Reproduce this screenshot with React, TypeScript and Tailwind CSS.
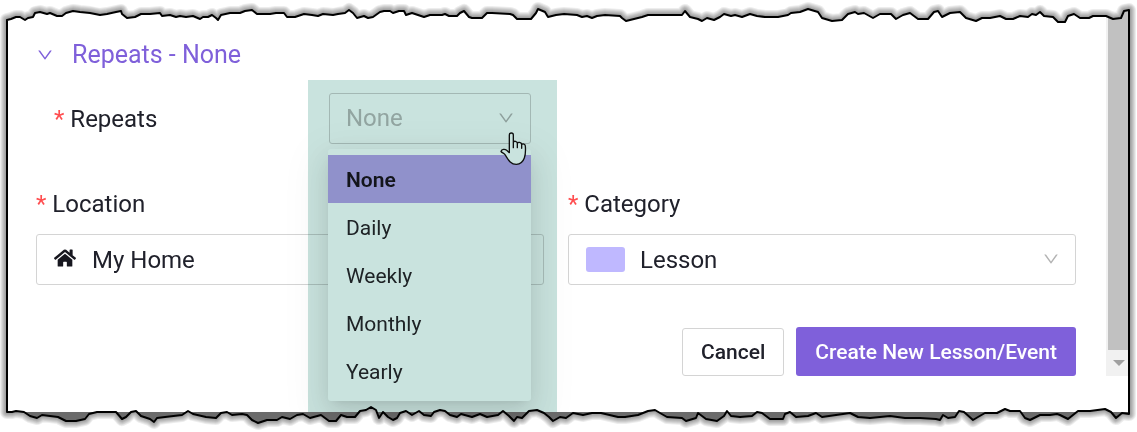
import { useState } from 'react';
import { AiOutlineDown } from 'react-icons/ai';
import { FaHome } from 'react-icons/fa';

const repeatOptions = ['None', 'Daily', 'Weekly', 'Monthly', 'Yearly'];

const topEdge =
  '7,20 11,19 16,17 20,17 25,20 28,18 33,17 35,13 40,12 47,14 50,13 57,16 62,16 66,13 73,11 80,12 90,13 100,15 107,14 116,12 121,11 122,14 127,18 135,17 141,14 150,14 160,13 162,16 170,15 176,17 180,16 186,17 193,16 200,19 203,17 208,17 212,15 216,18 218,20 221,15 230,13 240,13 245,11 252,10 257,14 262,14 270,14 276,13 284,13 287,17 295,17 304,14 312,15 318,16 323,14 333,15 338,14 345,13 349,10 353,13 357,18 364,16 368,18 373,17 380,12 384,11 390,11 393,13 399,11 404,11 406,15 412,13 418,15 424,17 430,15 442,15 445,14 449,16 457,16 460,13 464,11 469,17 472,18 482,18 487,13 492,13 510,14 513,15 517,19 531,19 536,13 538,9 545,12 548,17 556,15 564,14 577,15 582,17 587,16 592,18 597,16 605,15 620,16 622,18 626,21 634,19 642,17 648,15 660,15 682,15 685,11 690,17 698,19 702,21 707,18 714,20 720,17 724,14 731,16 735,15 742,17 750,14 757,16 765,17 778,17 788,15 791,13 800,12 808,9 818,12 822,18 832,21 842,20 848,14 855,12 858,14 864,13 873,18 880,14 891,14 896,19 903,15 910,13 918,19 928,19 934,12 938,11 942,17 950,13 960,12 966,18 976,21 982,18 990,18 1000,16 1006,19 1013,19 1020,16 1028,17 1032,14 1036,15 1040,12 1044,16 1053,17 1058,22 1065,22 1068,16 1074,14 1080,18 1089,18 1093,16 1106,16 1113,19 1121,18 1124,11 1129,10';

const bottomEdge =
  '1129,414 1122,413 1116,418 1111,412 1105,409 1090,411 1078,411 1068,419 1060,415 1057,414 1050,415 1040,415 1030,420 1025,418 1020,411 1010,411 1005,409 997,413 985,413 978,417 973,420 964,412 959,411 955,417 948,418 943,415 940,420 936,419 920,418 905,418 890,416 870,418 858,417 850,413 822,417 816,413 808,416 796,417 790,412 785,414 783,419 770,419 762,413 757,412 752,416 740,417 731,416 727,411 724,416 717,421 706,419 698,413 696,418 686,421 682,418 667,417 660,413 655,410 648,411 638,415 625,417 618,417 601,413 592,413 583,415 573,413 566,418 560,417 553,421 549,417 544,413 537,410 529,411 522,418 517,417 514,421 509,416 503,411 498,415 487,417 480,414 472,417 461,414 457,417 450,415 445,411 440,410 434,412 431,416 424,415 419,411 412,415 406,411 400,413 397,418 393,420 388,417 383,412 379,418 376,410 371,407 366,410 360,411 355,417 347,417 341,415 336,421 329,421 321,415 310,418 303,414 297,415 290,419 282,417 277,420 267,420 258,423 252,420 247,415 242,414 232,415 227,412 221,413 216,418 206,417 193,414 188,411 182,415 165,417 157,418 154,422 150,419 141,416 136,411 131,412 126,417 122,419 116,412 108,412 97,412 89,414 85,419 76,421 66,421 58,417 50,416 42,415 37,418 30,416 24,412 16,411 12,412 7,412';

const shadowWidths = [4, 6, 8, 10, 12, 14];

function TornEdge() {
  const outline = `M${topEdge} L${bottomEdge} Z`;
  return (
    <svg
      className="absolute inset-0 z-40 w-full h-full pointer-events-none"
      viewBox="0 0 1137 432"
      preserveAspectRatio="none"
      aria-hidden="true"
    >
      <defs>
        <clipPath id="outside">
          <path clipRule="evenodd" d={`M0,0 H1137 V432 H0 Z ${outline}`} />
        </clipPath>
      </defs>
      <g clipPath="url(#outside)">
        <rect width="1137" height="432" fill="#fff" />
        {shadowWidths.map((width) => (
          <path
            key={width}
            d={outline}
            fill="none"
            stroke="#000"
            strokeOpacity="0.07"
            strokeWidth={width}
            strokeLinejoin="round"
          />
        ))}
      </g>
      <path d={outline} fill="none" stroke="#000" strokeWidth="2" strokeLinejoin="round" />
    </svg>
  );
}

function HandCursor() {
  return (
    <svg className="absolute z-20 left-[171px] top-[39px] w-[27px] h-[34px]" viewBox="-1 -1 81 102" aria-hidden="true">
      <path
        d="M27 61V8C27 0 39 0 39 8V46V30C40 25 51 26 51 33V46V33C52 29 63 29 64 36V48V37C67 33 75 35 75 41C77 65 74 95 48 96C28 96 22 78 14 67C10 62 4 61 2 57C4 50 14 50 19 54Z"
        fill="#fff"
        stroke="#111"
        strokeWidth="4"
        strokeLinejoin="round"
      />
    </svg>
  );
}

function RequiredLabel({ htmlFor, text }: { htmlFor: string; text: string }) {
  return (
    <label htmlFor={htmlFor} className="flex gap-1.5 text-2xl text-[#20212b]">
      <span className="text-[#ff4d4f]">*</span>
      {text}
    </label>
  );
}

export default function App() {
  const [repeat, setRepeat] = useState('None');

  return (
    <div className="relative bg-white font-['Roboto',sans-serif]">
      <div className="mx-2 flex">
        <form className="flex-1 min-w-0 pl-7 pr-[30px] pt-[37px]" onSubmit={(e) => e.preventDefault()}>
          {/* Section header */}
          <button type="button" className="flex items-center gap-[18px] h-9 text-[25px] text-[#7f60da]">
            <AiOutlineDown className="w-[18px] h-[18px]" />
            Repeats - {repeat}
          </button>

          {/* Repeats */}
          <div className="flex items-center mt-5 pl-[18px]">
            <div className="w-[275px]">
              <RequiredLabel htmlFor="repeats" text="Repeats" />
            </div>
            <div className="relative w-[202px]">
              <select
                id="repeats"
                value={repeat}
                onChange={(e) => setRepeat(e.target.value)}
                className="block w-full h-[51px] pl-4 pr-10 pb-0.5 appearance-none rounded-[3px] border border-[#cfcfcf] bg-white text-2xl text-[#b9b9b9]"
              >
                {repeatOptions.map((option) => (
                  <option key={option}>{option}</option>
                ))}
              </select>
              <AiOutlineDown className="absolute right-4 top-4 w-[18px] h-[18px] text-[#b3b3b3] pointer-events-none" />

              {/* Options menu */}
              <ul
                role="listbox"
                aria-label="Repeats"
                className="absolute z-10 -left-px right-0 top-14 py-1.5 rounded-[3px] bg-white text-[21px] text-[#26272b] shadow-[0_4px_9px_-6px_rgba(0,0,0,0.12),0_9px_24px_rgba(0,0,0,0.1),0_13px_42px_12px_rgba(0,0,0,0.05)]"
              >
                {repeatOptions.map((option) => (
                  <li
                    key={option}
                    role="option"
                    aria-selected={option === repeat}
                    onClick={() => setRepeat(option)}
                    className={`flex items-center h-12 px-[18px] pt-1 ${
                      option === repeat ? 'bg-[#b7a3ea] font-semibold text-[#17171f]' : ''
                    }`}
                  >
                    {option}
                  </li>
                ))}
              </ul>

              <HandCursor />
              {/* Green highlight */}
              <div className="absolute z-30 -left-[21px] -right-[26px] -top-[13px] h-[332px] bg-[#c9e3de] mix-blend-multiply pointer-events-none" />
            </div>
          </div>

          {/* Location and category */}
          <div className="grid grid-cols-2 gap-6 mt-11">
            <div>
              <RequiredLabel htmlFor="location" text="Location" />
              <div className="relative mt-3.5">
                <select
                  id="location"
                  className="block w-full h-[51px] pl-[55px] pr-10 appearance-none rounded-[3px] border border-[#d4d4d4] bg-white text-2xl text-[#20212b]"
                >
                  <option>My Home</option>
                </select>
                <FaHome className="absolute left-[18px] top-3 w-[22px] h-6 text-[#17171f] pointer-events-none" />
                <AiOutlineDown className="absolute right-4 top-4 w-[18px] h-[18px] text-[#b3b3b3] pointer-events-none" />
              </div>
            </div>
            <div>
              <RequiredLabel htmlFor="category" text="Category" />
              <div className="relative mt-3.5">
                <select
                  id="category"
                  className="block w-full h-[51px] pl-[71px] pr-10 appearance-none rounded-[3px] border border-[#d4d4d4] bg-white text-2xl text-[#20212b]"
                >
                  <option>Lesson</option>
                </select>
                <span className="absolute left-[18px] top-[13px] w-[39px] h-[25px] rounded-[3px] bg-[#bfb8ff] pointer-events-none" />
                <AiOutlineDown className="absolute right-4 top-4 w-[18px] h-[18px] text-[#b3b3b3] pointer-events-none" />
              </div>
            </div>
          </div>

          {/* Actions */}
          <div className="flex items-center justify-end gap-3 mt-[42px] text-[21px] font-medium">
            <button type="button" className="h-12 px-[18px] pt-0.5 rounded-[3px] border border-[#d4d4d4] bg-white text-[#20212b]">
              Cancel
            </button>
            <button type="submit" className="h-[49px] px-[19px] pt-0.5 rounded-[3px] bg-[#7f60da] text-white">
              Create New Lesson/Event
            </button>
          </div>
        </form>

        {/* Scrollbar */}
        <div className="flex flex-col w-[23px] pl-0.5 bg-[#f1f1f1]">
          <div className="flex-1 bg-[#c1c1c1]" />
          <div className="flex items-center justify-center h-[26px]">
            <svg className="w-3 h-1.5" viewBox="0 0 12 6" aria-hidden="true">
              <path d="M0 0h12L6 6z" fill="#a0a0a0" />
            </svg>
          </div>
        </div>
      </div>
      <div className="h-9" />
      <div className="h-5 bg-[#6b6b6b]" />
      <TornEdge />
    </div>
  );
}
